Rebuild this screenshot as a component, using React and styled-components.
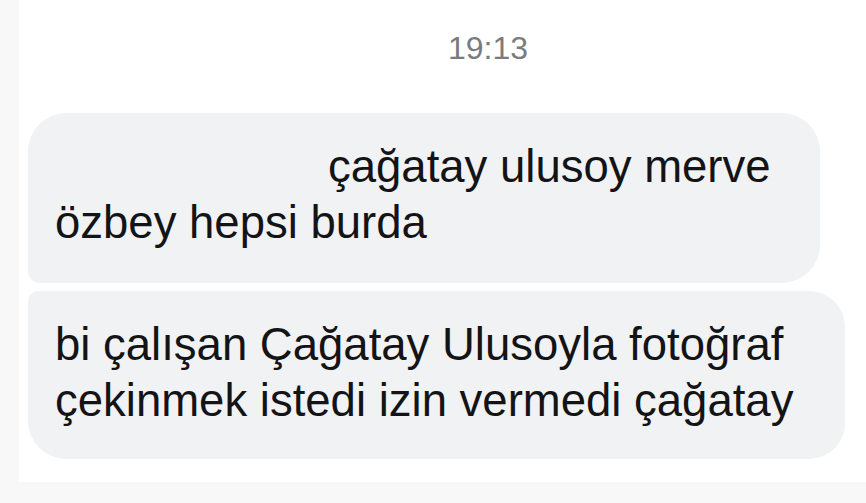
import React from "react";
import styled, { createGlobalStyle } from "styled-components";

const Global = createGlobalStyle`
  html, body {
    margin: 0;
    padding: 0;
    background: #f8f8f8;
  }
  body {
    font-family: "Liberation Sans", Arial, sans-serif;
    -webkit-font-smoothing: antialiased;
  }
`;

const Page = styled.div`
  width: 866px;
  height: 503px;
  overflow: hidden;
  background: #f8f8f8;
  display: flex;
  flex-direction: column;
`;

const Panel = styled.main`
  margin-left: 19px;
  height: 482px;
  background: #ffffff;
  display: flex;
  flex-direction: column;
`;

const Timestamp = styled.div`
  padding: 28px 0 0 91px;
  height: 113px;
  box-sizing: border-box;
  text-align: center;
  font-size: 32px;
  line-height: 40px;
  color: #7b7b7e;
  font-weight: 400;
`;

const Thread = styled.div`
  display: flex;
  flex-direction: column;
  gap: 8px;
  padding-left: 9px;
`;

const Bubble = styled.div`
  box-sizing: border-box;
  width: ${(p) => p.$width}px;
  background: #f1f2f4;
  color: #141416;
  font-size: 45.5px;
  line-height: 56px;
  padding: 26px 20px ${(p) => (p.$position === "first" ? 32 : 30)}px 27px;
  border-radius: ${(p) =>
    p.$position === "first" ? "38px 38px 38px 12px" : "10px 36px 36px 38px"};
  white-space: pre-line;
  text-indent: ${(p) => p.$indent || 0}px;
`;

export default function App() {
  return (
    <Page>
      <Global />
      <Panel>
        <Timestamp>19:13</Timestamp>
        <Thread>
          <Bubble $position="first" $width={792} $indent={273}>
            {"çağatay ulusoy merve\nözbey hepsi burda"}
          </Bubble>
          <Bubble $position="last" $width={817}>
            {"bi çalışan Çağatay Ulusoyla fotoğraf\nçekinmek istedi izin vermedi çağatay"}
          </Bubble>
        </Thread>
      </Panel>
    </Page>
  );
}
